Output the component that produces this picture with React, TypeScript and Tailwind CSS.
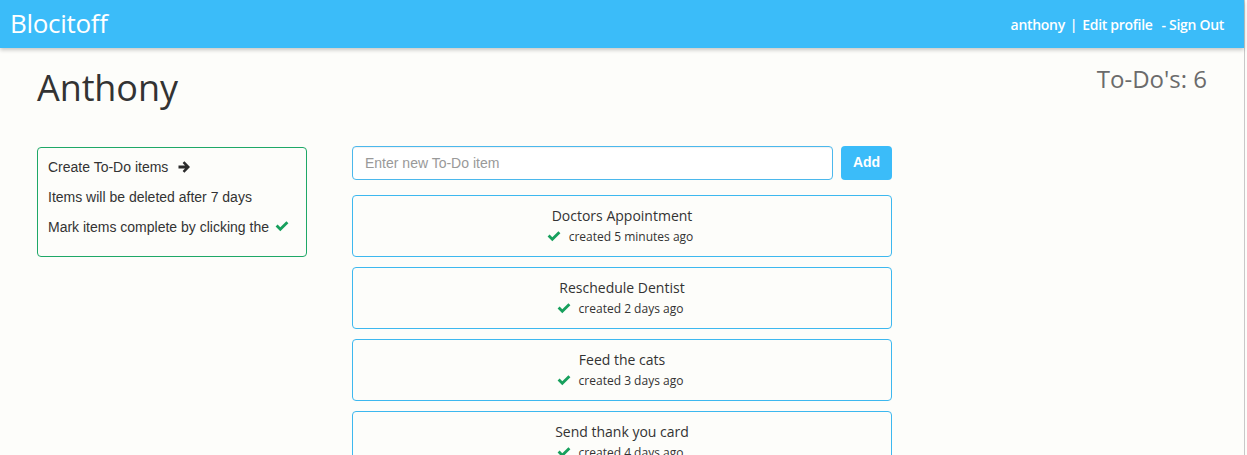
import React from "react";

const Check = ({ className = "" }: { className?: string }) => (
  <svg viewBox="0 0 14 11" width="14" height="11" className={className}>
    <path d="M0.6 5.6 L2.6 3.6 L5.3 6.3 L11.4 0.2 L13.4 2.2 L5.3 10.3 Z" fill="#17a05d" />
  </svg>
);

const Arrow = () => (
  <svg viewBox="0 0 13 12" width="13" height="12" className="inline-block">
    <path d="M0.5 4.4 H7 L4.6 2 L6.4 0.3 L12 6 L6.4 11.7 L4.6 10 L7 7.6 H0.5 Z" fill="#2b2b2b" />
  </svg>
);

const todos = [
  { title: "Doctors Appointment", created: "created 5 minutes ago" },
  { title: "Reschedule Dentist", created: "created 2 days ago" },
  { title: "Feed the cats", created: "created 3 days ago" },
  { title: "Send thank you card", created: "created 4 days ago" },
];

export default function App() {
  return (
    <div className="flex w-[1247px] h-[455px] overflow-hidden bg-[#fdfdfa]">
      <div className="flex-1 flex flex-col min-w-0">
        <header className="h-[48px] shrink-0 bg-[#3bbcf9] flex items-center justify-between pl-[10px] pr-[20px] shadow-[0_2px_4px_rgba(0,0,0,0.22)] relative z-10 font-['Open_Sans',sans-serif] text-white">
          <div className="text-[26px] font-medium leading-none tracking-[-0.3px] -mt-[2px]">Blocitoff</div>
          <div className="flex items-center text-[14px] font-semibold tracking-[-0.3px]">
            <span>anthony</span>
            <span className="mx-[5px]">|</span>
            <span>Edit profile</span>
            <span className="ml-[9px]">- Sign Out</span>
          </div>
        </header>
        <main className="flex-1 flex flex-col pl-[37px] pr-[37px]">
          <div className="flex justify-between items-start">
            <h1 className="mt-[20px] text-[36px] leading-[1.1] text-[#333] font-['Open_Sans',sans-serif] tracking-[-0.1px]">
              Anthony
            </h1>
            <div className="mt-[18px] text-[24px] leading-[1.1] text-[#6b6b6b] font-['Open_Sans',sans-serif]">
              To-Do's: 6
            </div>
          </div>
          <div className="flex items-start mt-[38px]">
            <div className="w-[270px] mt-[1px] border border-[#1ea867] rounded-[4px] pl-[10px] pt-[9px] pb-[19px] flex flex-col gap-[10px] font-['Liberation_Sans',Arial,sans-serif] text-[14px] leading-[20px] text-[#333]">
              <div className="flex items-center">
                <span>Create To-Do items</span>
                <span className="ml-[10px] flex items-center">
                  <Arrow />
                </span>
              </div>
              <div>Items will be deleted after 7 days</div>
              <div className="flex items-center">
                <span>Mark items complete by clicking the</span>
                <Check className="ml-[6px]" />
              </div>
            </div>
            <div className="ml-[45px] w-[540px] flex flex-col">
              <div className="flex gap-[8px]">
                <input
                  className="w-[481px] h-[34px] border border-[#4bb8ec] rounded-[4px] px-[12px] text-[14px] font-['Liberation_Sans',Arial,sans-serif] placeholder:text-[#999] bg-white shadow-[inset_0_1px_1px_rgba(0,0,0,0.06)] outline-none"
                  placeholder="Enter new To-Do item"
                />
                <button className="w-[51px] h-[34px] rounded-[4px] bg-[#3bbcf9] text-white font-bold text-[14px] font-['Liberation_Sans',Arial,sans-serif]">
                  Add
                </button>
              </div>
              <div className="mt-[15px] flex flex-col gap-[10px]">
                {todos.map((t) => (
                  <div
                    key={t.title}
                    className="h-[62px] shrink-0 border border-[#3db8ef] rounded-[4px] pt-[10px] flex flex-col items-center font-['Open_Sans',sans-serif] text-[#333]"
                  >
                    <div className="text-[14px] leading-[20px]">{t.title}</div>
                    <div className="flex items-center text-[12px] leading-[20px] -ml-[4px] mt-[1px]">
                      <Check className="mr-[8px]" />
                      <span>{t.created}</span>
                    </div>
                  </div>
                ))}
              </div>
            </div>
          </div>
        </main>
      </div>
      <div className="w-[1px] bg-[#c8c8c8]" />
      <div className="w-[2px] bg-[#fdfdfa]" />
    </div>
  );
}
